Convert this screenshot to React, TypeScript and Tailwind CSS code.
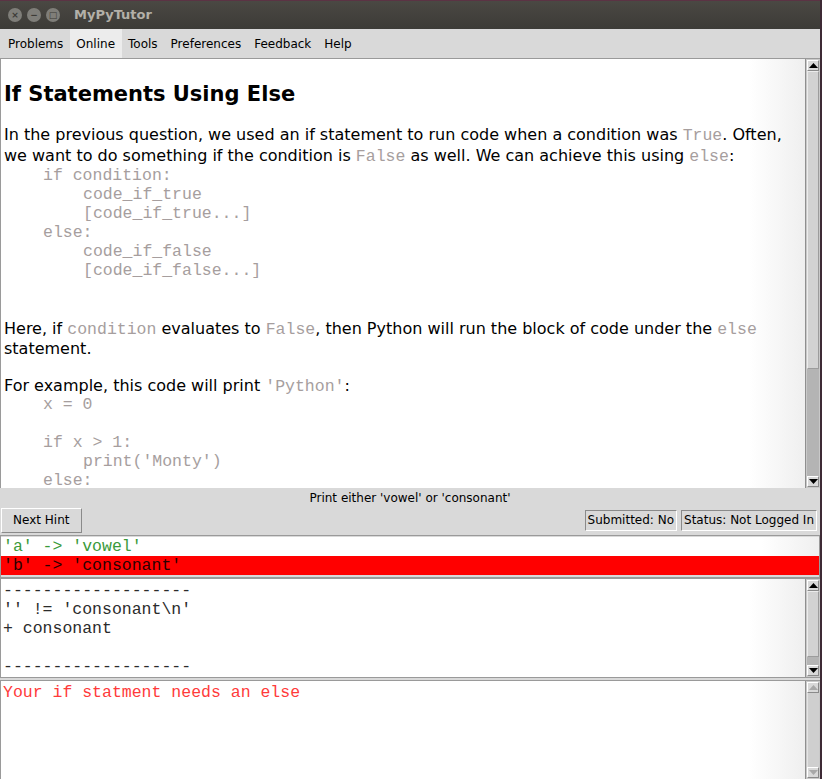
import React from "react";

const sans = "font-['DejaVu_Sans','Liberation_Sans',sans-serif]";
const mono = "font-['Liberation_Mono','Courier_New',monospace]";

// little code-ish run inside prose
function Code({ children }: { children: React.ReactNode }) {
  return <span className={`${mono} text-[16.5px] text-[#a69e9e]`}>{children}</span>;
}

function Arrow({ up, dim }: { up?: boolean; dim?: boolean }) {
  return (
    <div className="h-[11px] bg-[#d9d9d9] border border-t-white border-l-white border-r-[#8a8a8a] border-b-[#8a8a8a] flex items-center justify-center">
      <svg width="9" height="5" viewBox="0 0 9 5">
        <polygon
          points={up ? "0,5 9,5 4.5,0" : "0,0 9,0 4.5,5"}
          fill={dim ? "#a8a8a8" : "#000"}
        />
      </svg>
    </div>
  );
}

// Tk style scrollbar: arrows, thumb pinned at the top, darker trough below
function ScrollBar({ thumb, disabled }: { thumb: number; disabled?: boolean }) {
  return (
    <div className="w-[15px] shrink-0 border-l border-[#8f8f8f] bg-[#c9c9c9] flex flex-col p-px">
      <Arrow up dim={disabled} />
      {disabled ? (
        <div className="flex-1 bg-[#cfcfcf] border-l border-[#e4e4e4]" />
      ) : (
        <div className="flex-1 flex flex-col">
          <div
            className="shrink-0 bg-[#d2d2d2] border border-t-[#ececec] border-l-[#ececec] border-r-[#9c9c9c] border-b-[#9c9c9c]"
            style={{ height: thumb }}
          />
          <div className="flex-1 bg-[#b4b4b4]" />
        </div>
      )}
      <Arrow dim={disabled} />
    </div>
  );
}

const paper = "bg-[linear-gradient(to_right,#ffffff_93%,#efefef)]";

function Line({ h, className = "", children }: { h: number; className?: string; children?: React.ReactNode }) {
  return (
    <div className={`whitespace-pre ${className}`} style={{ height: h, lineHeight: `${h}px` }}>
      {children}
    </div>
  );
}

function CodeLine({ indent, children }: { indent: 1 | 2; children?: React.ReactNode }) {
  return (
    <Line h={19} className={`${mono} text-[16.5px] text-[#a69e9e] ${indent === 1 ? "pl-[39px]" : "pl-[79px]"}`}>
      {children}
    </Line>
  );
}

const menu = ["Problems", "Online", "Tools", "Preferences", "Feedback", "Help"];

export default function App() {
  return (
    <div className={`w-[822px] h-[779px] overflow-hidden flex flex-col bg-[#d9d9d9] border-r-2 border-[#3d2a35] ${sans}`}>
      {/* title bar */}
      <div className="h-[29px] shrink-0 bg-[linear-gradient(#4a4843,#3c3b37)] border-t border-[#5b3344] flex items-center pl-[8px]">
        <div className="flex gap-[5px]">
          {["×", "−", "□"].map((g) => (
            <div
              key={g}
              className="w-[14px] h-[14px] rounded-full bg-[#7f7e79] flex items-center justify-center text-[9px] leading-none text-[#3c3b37] font-bold"
            >
              {g}
            </div>
          ))}
        </div>
        <div className="ml-[14px] text-[13px] font-bold text-[#b3b0a8]">MyPyTutor</div>
      </div>

      {/* menu bar */}
      <div className="h-[30px] shrink-0 flex items-stretch pl-[1.5px] border-b border-[#9a9a9a] text-[12px] text-black">
        {menu.map((m) => (
          <div
            key={m}
            className={`px-[6.5px] flex items-center ${m === "Online" ? "bg-[#ececec]" : ""}`}
          >
            {m}
          </div>
        ))}
      </div>

      {/* lesson text */}
      <div className="h-[429px] shrink-0 flex border-l border-[#9a9a9a]">
        <div className={`flex-1 overflow-hidden pl-[3px] text-[16px] text-black ${paper}`}>
          <Line h={28} className="mt-[21px] text-[21px] font-bold">If Statements Using Else</Line>
          <Line h={22} className="mt-[16px]">
            In the previous question, we used an if statement to run code when a condition was <Code>True</Code>. Often,
          </Line>
          <Line h={20}>
            we want to do something if the condition is <Code>False</Code> as well. We can achieve this using <Code>else</Code>:
          </Line>
          <CodeLine indent={1}>if condition:</CodeLine>
          <CodeLine indent={2}>code_if_true</CodeLine>
          <CodeLine indent={2}>[code_if_true...]</CodeLine>
          <CodeLine indent={1}>else:</CodeLine>
          <CodeLine indent={2}>code_if_false</CodeLine>
          <CodeLine indent={2}>[code_if_false...]</CodeLine>
          <Line h={21} className="mt-[38px]">
            Here, if <Code>condition</Code> evaluates to <Code>False</Code>, then Python will run the block of code under the <Code>else</Code>
          </Line>
          <Line h={19}>statement.</Line>
          <Line h={19} className="mt-[18px]">
            For example, this code will print <Code>'Python'</Code>:
          </Line>
          <CodeLine indent={1}>x = 0</CodeLine>
          <CodeLine indent={1}> </CodeLine>
          <CodeLine indent={1}>if x &gt; 1:</CodeLine>
          <CodeLine indent={2}>print('Monty')</CodeLine>
          <CodeLine indent={1}>else:</CodeLine>
        </div>
        <ScrollBar thumb={298} />
      </div>

      {/* problem line + controls */}
      <div className="h-[19px] shrink-0 pt-[2px] text-center text-[12px] leading-[17px] text-black">
        Print either 'vowel' or 'consonant'
      </div>
      <div className="h-[26px] shrink-0 flex items-center pl-px pr-[3px] text-[12px] text-black">
        <button className="h-[25px] w-[81px] text-left pl-[11px] bg-[#d9d9d9] border border-t-white border-l-white border-r-[#8a8a8a] border-b-[#8a8a8a]">
          Next Hint
        </button>
        <div className="ml-auto h-[21px] px-[2px] flex items-center border border-t-[#8a8a8a] border-l-[#8a8a8a] border-r-white border-b-white">
          Submitted: No
        </div>
        <div className="ml-[4px] h-[21px] px-[2px] flex items-center border border-t-[#8a8a8a] border-l-[#8a8a8a] border-r-white border-b-white">
          Status: Not Logged In
        </div>
      </div>

      {/* test results */}
      <div className={`mt-[2px] h-[43px] shrink-0 border border-[#9a9a9a] pt-px ${mono} text-[16.5px]`}>
        <Line h={19} className={`pl-[2px] text-[#3a9a3a] ${paper}`}>'a' -&gt; 'vowel'</Line>
        <Line h={19} className="pl-[2px] bg-[#ff0000] text-[#2a0000]">'b' -&gt; 'consonant'</Line>
      </div>

      {/* output */}
      <div className="h-[100px] shrink-0 flex border border-[#9a9a9a] border-r-0">
        <div className={`flex-1 pt-[2px] pl-[2px] ${mono} text-[16.5px] text-[#2b2b2b] ${paper}`}>
          <Line h={19}>-------------------</Line>
          <Line h={19}>'' != 'consonant\n'</Line>
          <Line h={19}>+ consonant</Line>
          <Line h={19}> </Line>
          <Line h={19}>-------------------</Line>
        </div>
        <ScrollBar thumb={66} />
      </div>

      {/* feedback */}
      <div className="mt-[2px] flex-1 flex border-l border-t border-[#9a9a9a]">
        <div className={`flex-1 pt-[2px] pl-[2px] ${mono} text-[16.5px] text-[#ff3a3a] ${paper}`}>
          <Line h={20}>Your if statment needs an else</Line>
        </div>
        <ScrollBar thumb={0} disabled />
      </div>
    </div>
  );
}
